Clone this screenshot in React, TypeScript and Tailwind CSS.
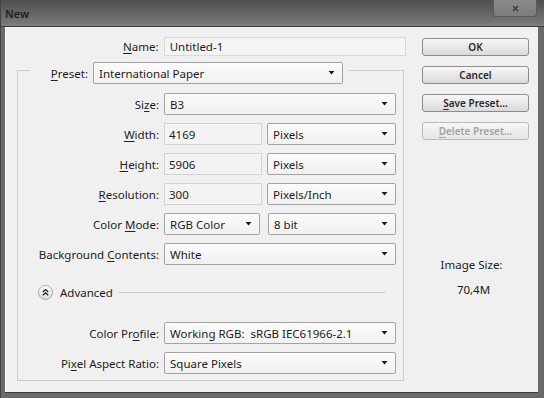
import React from "react";

function Arrow() {
  return (
    <svg width="7" height="4" viewBox="0 0 7 4" className="shrink-0">
      <polygon points="0.5,0 6.5,0 3.5,3.5" fill="#1a1a1a" />
    </svg>
  );
}

function U({ children }: { children: React.ReactNode }) {
  return <span className="underline underline-offset-[2px] decoration-[#222]">{children}</span>;
}

function Select({ value, w }: { value: string; w: string }) {
  return (
    <div
      className={`${w} h-[22px] flex items-center justify-between pl-[5px] pr-[7px] border border-[#a3a3a3] rounded-[2px] bg-gradient-to-b from-[#fbfbfb] to-[#f1f1f1] text-[#1c1c1c]`}
    >
      <span className="whitespace-pre">{value}</span>
      <Arrow />
    </div>
  );
}

function Field({ value, w }: { value: string; w: string }) {
  return (
    <div className={`${w} h-[22px] flex items-center pl-[4px] border border-[#d3d3d3] bg-[#f3f3f3] text-[#1c1c1c]`}>
      {value}
    </div>
  );
}

function Row({ label, children }: { label: React.ReactNode; children: React.ReactNode }) {
  return (
    <div className="flex items-center h-[22px]">
      <div className="w-[141px] text-right pr-0 text-[#1c1c1c]">{label}</div>
      <div className="ml-[5px] flex items-center">{children}</div>
    </div>
  );
}

function Btn({ children, disabled }: { children: React.ReactNode; disabled?: boolean }) {
  return (
    <div
      className={
        disabled
          ? "h-[18px] flex items-center justify-center rounded-[3px] border border-[#b9b9b9] bg-gradient-to-b from-[#f6f6f6] to-[#e6e6e6] text-[10px] font-semibold text-[#a2a2a2]"
          : "h-[18px] flex items-center justify-center rounded-[3px] border border-[#8c8c8c] bg-gradient-to-b from-[#f7f7f7] to-[#dadada] text-[10px] font-semibold text-[#2a2a2a]"
      }
    >
      {children}
    </div>
  );
}

export default function App() {
  return (
    <div className="w-[544px] h-[398px] flex flex-col bg-[#6a6a6a] border-l border-[#444] font-['Noto_Sans',sans-serif] text-[11.5px] leading-[15px]">
      {/* title bar */}
      <div className="h-[27px] shrink-0 flex items-start justify-between bg-gradient-to-b from-[#4e4e4e] to-[#7c7c7c] border-b border-[#3e3e3e]">
        <span className="self-center pl-[4px] text-[11px] font-semibold text-[#1e1e1e]">New</span>
        <div className="mr-[7px] w-[44px] h-[17px] flex items-center justify-center rounded-b-[3px] border border-t-0 border-[#5a5a5a] bg-gradient-to-b from-[#8a8a8a] to-[#7c7c7c]">
          <svg width="7" height="7" viewBox="0 0 7 7">
            <path d="M1 1 L6 6 M6 1 L1 6" stroke="#3a3a3a" strokeWidth="1.4" />
          </svg>
        </div>
      </div>

      {/* body */}
      <div className="flex-1 ml-[4px] mr-[6px] mb-[6px] flex bg-[#f0f0f0] border-l border-[#fafafa] shadow-[0_1px_0_#3a3a3a]">
        {/* left column */}
        <div className="w-[400px] pl-[11px] pt-[10px] flex flex-col">
          <div className="flex items-center h-[19px]">
            <div className="w-[142px] text-right text-[#1c1c1c]">
              <U>N</U>ame:
            </div>
            <div className="ml-[5px] w-[243px] h-[19px] flex items-center pl-[5px] border border-[#d8d8d8] bg-[#f4f4f4] text-[#1c1c1c]">
              Untitled-1
            </div>
          </div>

          {/* preset group */}
          <div className="mt-[6px] w-[387px] flex flex-col">
            <div className="flex h-[22px]">
              <div className="w-[13px] mt-[8px] border-t border-l border-[#cdcdcd]" />
              <div className="w-[58px] self-center text-right text-[#1c1c1c]">
                <U>P</U>reset:
              </div>
              <div className="ml-[5px]">
                <Select value="International Paper" w="w-[250px]" />
              </div>
              <div className="flex-1 ml-[5px] mt-[8px] border-t border-r border-[#cdcdcd]" />
            </div>

            <div className="border-l border-r border-b border-[#cdcdcd] pt-[9px] pb-[6px] flex flex-col">
              <Row label={<>Si<U>z</U>e:</>}>
                <Select value="B3" w="w-[232px]" />
              </Row>
              <div className="mt-[8px]">
                <Row label={<><U>W</U>idth:</>}>
                  <Field value="4169" w="w-[98px]" />
                  <div className="ml-[5px]">
                    <Select value="Pixels" w="w-[129px]" />
                  </div>
                </Row>
              </div>
              <div className="mt-[8px]">
                <Row label={<><U>H</U>eight:</>}>
                  <Field value="5906" w="w-[98px]" />
                  <div className="ml-[5px]">
                    <Select value="Pixels" w="w-[129px]" />
                  </div>
                </Row>
              </div>
              <div className="mt-[8px]">
                <Row label={<><U>R</U>esolution:</>}>
                  <Field value="300" w="w-[98px]" />
                  <div className="ml-[5px]">
                    <Select value="Pixels/Inch" w="w-[129px]" />
                  </div>
                </Row>
              </div>
              <div className="mt-[8px]">
                <Row label={<>Color <U>M</U>ode:</>}>
                  <Select value="RGB Color" w="w-[96px]" />
                  <div className="ml-[8px]">
                    <Select value="8 bit" w="w-[128px]" />
                  </div>
                </Row>
              </div>
              <div className="mt-[8px]">
                <Row label={<>Background <U>C</U>ontents:</>}>
                  <Select value="White" w="w-[232px]" />
                </Row>
              </div>

              {/* advanced */}
              <div className="mt-[20px] h-[15px] pl-[20px] pr-[18px] flex items-center">
                <svg width="15" height="15" viewBox="0 0 15 15" className="shrink-0">
                  <defs>
                    <linearGradient id="adv" x1="0" y1="0" x2="0" y2="1">
                      <stop offset="0" stopColor="#ffffff" />
                      <stop offset="1" stopColor="#dadada" />
                    </linearGradient>
                  </defs>
                  <circle cx="7.5" cy="7.5" r="7" fill="url(#adv)" stroke="#a8a8a8" />
                  <path d="M4.8 7 L7.5 4.6 L10.2 7 M4.8 10.2 L7.5 7.8 L10.2 10.2" fill="none" stroke="#1e1e1e" strokeWidth="1.3" />
                </svg>
                <span className="ml-[7px] text-[#1c1c1c]">Advanced</span>
                <div className="flex-1 ml-[6px] h-px bg-[#c9c9c9]" />
              </div>

              <div className="mt-[22px]">
                <Row label={<>Color Pr<U>o</U>file:</>}>
                  <Select value="Working RGB:  sRGB IEC61966-2.1" w="w-[232px]" />
                </Row>
              </div>
              <div className="mt-[8px]">
                <Row label={<>Pi<U>x</U>el Aspect Ratio:</>}>
                  <Select value="Square Pixels" w="w-[232px]" />
                </Row>
              </div>
            </div>
          </div>
        </div>

        {/* right column */}
        <div className="ml-[16px] w-[107px] pt-[11px] flex flex-col">
          <div className="flex flex-col gap-[10px]">
            <Btn>OK</Btn>
            <Btn>Cancel</Btn>
            <Btn>
              <U>S</U>ave Preset...
            </Btn>
            <Btn disabled>
              <span className="underline underline-offset-[2px]">D</span>elete Preset...
            </Btn>
          </div>
          <div className="mt-[117px] pr-[8px] text-center text-[#1c1c1c]">Image Size:</div>
          <div className="mt-[10px] pr-[4px] text-center text-[#1c1c1c]">70,4M</div>
        </div>
      </div>
    </div>
  );
}
